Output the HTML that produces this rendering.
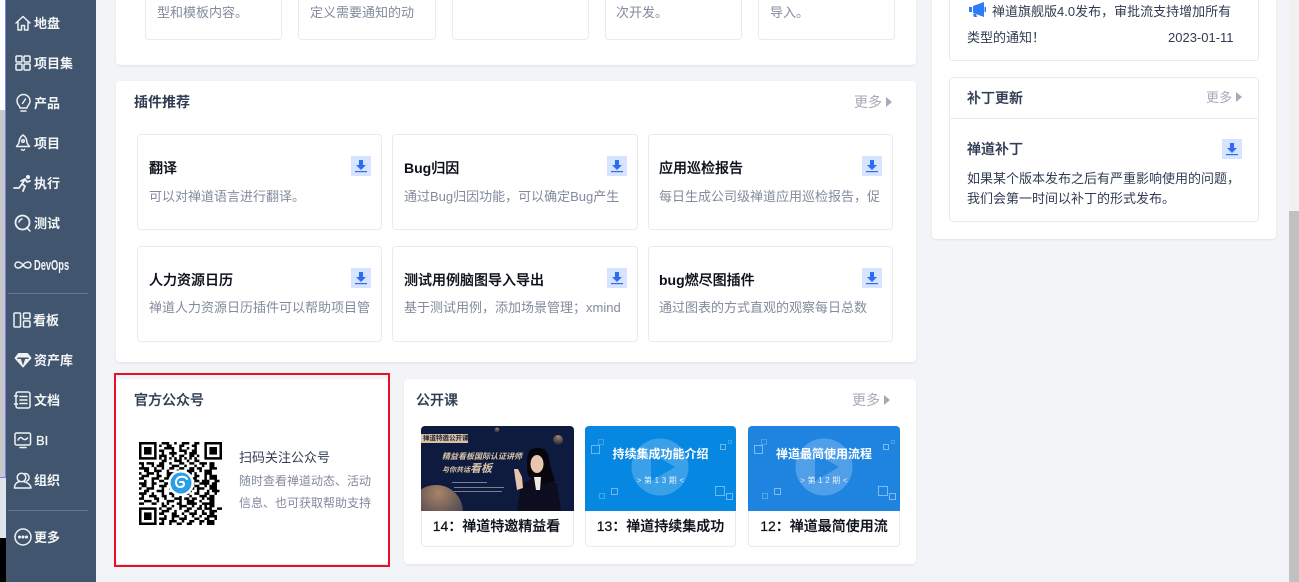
<!DOCTYPE html>
<html lang="zh-CN">
<head>
<meta charset="utf-8">
<title>禅道</title>
<style>
*{box-sizing:border-box;margin:0;padding:0}
html,body{width:1299px;height:582px;overflow:hidden;background:#f3f4f7}
body{position:relative;font-family:"Liberation Sans","Noto Sans CJK SC",sans-serif;font-size:13px;color:#313c52}
.a{position:absolute}
.t{position:absolute;white-space:nowrap;line-height:20px}
.card{position:absolute;background:#fff;border-radius:4px;box-shadow:0 1px 2px rgba(0,0,0,.08)}
.box{position:absolute;background:#fff;border:1px solid #e9ebef;border-radius:4px}
.nav{position:absolute;left:34px;color:#f2f4f6;font-weight:700;font-size:13px;line-height:20px;white-space:nowrap}
.ni{position:absolute;left:13px;width:20px;height:20px;fill:none;stroke:#eef1f4;stroke-width:1.5;stroke-linecap:round;stroke-linejoin:round}
.sep{position:absolute;left:8px;width:80px;height:1px;background:#65788e}
.title{font-size:14px;font-weight:700;color:#313c52}
.more{font-size:13px;color:#a6aab8}
.tri{position:absolute;width:0;height:0;border-left:6px solid #a6aab8;border-top:5px solid transparent;border-bottom:5px solid transparent}
.pt{font-size:14px;font-weight:500;color:#0b0f18;-webkit-text-stroke:.2px #0b0f18}
.pt b{font-weight:700;-webkit-text-stroke:0}
.gray{color:#838a9d}
.dl{position:absolute;width:20px;height:20px;background:#d6e4ff}
.dl svg{display:block;width:20px;height:20px}
.vid{position:absolute;top:426px;height:121px;background:#fff;box-shadow:inset 0 0 0 1px #e9ebef;border-radius:4px;overflow:hidden}
.vt{position:absolute;left:0;right:2px;top:85px;height:30px;text-align:center;line-height:30px;font-size:14px;font-weight:500;color:#0b0f18;white-space:nowrap;overflow:hidden;-webkit-text-stroke:.2px #0b0f18}
.thumb{position:absolute;left:0;top:0;right:0;height:85px;overflow:hidden}
</style>
</head>
<body>

<!-- left strip -->
<div class="a" style="left:0;top:0;width:6px;height:110px;background:#fff"></div>
<div class="a" style="left:0;top:110px;width:6px;height:367px;background:#c8c8c8"></div>
<div class="a" style="left:0;top:477px;width:6px;height:61px;background:#dde6ea"></div>
<div class="a" style="left:0;top:538px;width:6px;height:44px;background:#000"></div>
<div class="a" style="left:0;top:477px;width:6px;height:1px;background:#7b7ff0"></div>
<div class="a" style="left:5px;top:0;width:1px;height:477px;background:#7b7ff0"></div>

<!-- sidebar -->
<div class="a" style="left:6px;top:0;width:90px;height:582px;background:#41566e"></div>
<svg class="ni" style="top:13px" viewBox="0 0 20 20"><path d="M3 10 10 3.500 17 10M5 9v8h3.500v-4.500h3V17H15V9"/></svg>
<div class="nav" style="top:14px">地盘</div>
<svg class="ni" style="top:53px" viewBox="0 0 20 20"><rect x="3" y="3" width="6" height="6" rx="1"/><rect x="11" y="3" width="6" height="6" rx="1"/><rect x="3" y="11" width="6" height="6" rx="1"/><rect x="11" y="11" width="6" height="6" rx="1"/></svg>
<div class="nav" style="top:54px">项目集</div>
<svg class="ni" style="top:93px" viewBox="0 0 20 20"><path d="M7 15c0-2-3-3.500-3-7a6.500 6.500 0 0 1 13 0c0 3.500-3 5-3 7zM8 18h5M12.500 6 9.500 10.500"/></svg>
<div class="nav" style="top:94px">产品</div>
<svg class="ni" style="top:133px" viewBox="0 0 20 20"><path d="M10 2c3 2 4 5 4 8l2.500 3.500h-13L6 10c0-3 1-6 4-8zM8.500 16.500a1.800 1.800 0 0 0 3 0"/><circle cx="10" cy="8" r="1.300"/></svg>
<div class="nav" style="top:134px">项目</div>
<svg class="ni" style="top:173px" viewBox="0 0 20 20"><path d="M1 15h5l3-4 3 2-2 5M8 8l4-2 2 3 3-1M12 6l-3 5" stroke-width="1.800"/><circle cx="15" cy="4" r="1.300" fill="#eef1f4"/></svg>
<div class="nav" style="top:174px">执行</div>
<svg class="ni" style="top:213px" viewBox="0 0 20 20"><circle cx="9.500" cy="9.500" r="7" stroke-width="1.800"/><path d="M13.500 14.500 17 18M6 9a4 4 0 0 1 3-3"/></svg>
<div class="nav" style="top:214px">测试</div>
<svg class="ni" style="top:255px" viewBox="0 0 20 20"><path d="M10 10C8 7.500 6.500 7 5 7a3 3 0 0 0 0 6c1.500 0 3-.5 5-3s3.500-3 5-3a3 3 0 0 1 0 6c-1.500 0-3-.5-5-3z"/></svg>
<div class="nav" style="top:256px;transform:scaleX(.62);transform-origin:0 50%;font-size:15px">DevOps</div>
<div class="sep" style="top:293px"></div>
<svg class="ni" style="top:310px" viewBox="0 0 20 20"><rect x="1" y="3" width="6.500" height="14" rx="1"/><rect x="10.500" y="3" width="6.500" height="5.500" rx="1"/><rect x="10.500" y="11" width="6.500" height="6" rx="1"/></svg>
<div class="nav" style="top:311px;left:33px">看板</div>
<svg class="ni" style="top:350px" viewBox="0 0 20 20"><path d="M5.500 3.500h9L18 8l-8 9-8-9zM2 8h16M7 8l3 9 3-9M7 8l3-4 3 4" fill="#eef1f4" stroke-width="1"/><path d="M5 8.300h10" stroke="#41566e"/></svg>
<div class="nav" style="top:351px">资产库</div>
<svg class="ni" style="top:390px" viewBox="0 0 20 20"><rect x="3" y="2" width="14" height="16" rx="2"/><path d="M7 6.500h7M7 10h7M7 13.500h7M1.500 6h3M1.500 14h3"/></svg>
<div class="nav" style="top:391px">文档</div>
<svg class="ni" style="top:430px" viewBox="0 0 20 20"><rect x="2" y="3" width="15.500" height="12" rx="1.500"/><path d="M5 10c1.500-3 3-3 4.500-1.500S13 10 14.500 8M7 17.500h6"/></svg>
<div class="nav" style="top:431px;left:36px;font-weight:400;-webkit-text-stroke:.3px #f2f4f6">BI</div>
<svg class="ni" style="top:470px" viewBox="0 0 20 20"><circle cx="8.500" cy="7.500" r="4.300"/><path d="M1.500 18c0-4 2.500-6 5-6.500M12 3.500a4 4 0 0 1 2 7.500M11 11.800c3 .5 6.500 2.500 7 6.200M1.500 18h16.500"/></svg>
<div class="nav" style="top:471px">组织</div>
<div class="sep" style="top:510px"></div>
<svg class="ni" style="top:527px" viewBox="0 0 20 20"><circle cx="10" cy="10" r="8"/><circle cx="6.500" cy="10" r=".8" fill="#eef1f4"/><circle cx="10" cy="10" r=".8" fill="#eef1f4"/><circle cx="13.500" cy="10" r=".8" fill="#eef1f4"/></svg>
<div class="nav" style="top:528px">更多</div>

<!-- card 1 -->
<div class="card" style="left:116px;top:-40px;width:800px;height:105px"></div>
<div class="box" style="left:145px;top:-40px;width:137px;height:80px"></div>
<div class="box" style="left:298px;top:-40px;width:138px;height:80px"></div>
<div class="box" style="left:452px;top:-40px;width:137px;height:80px"></div>
<div class="box" style="left:605px;top:-40px;width:137px;height:80px"></div>
<div class="box" style="left:758px;top:-40px;width:137px;height:80px"></div>
<div class="t gray" style="left:157px;top:3px">型和模板内容。</div>
<div class="t gray" style="left:310px;top:3px">定义需要通知的动</div>
<div class="t gray" style="left:616px;top:3px">次开发。</div>
<div class="t gray" style="left:770px;top:3px">导入。</div>

<!-- plugin card -->
<div class="card" style="left:116px;top:81px;width:800px;height:281px"></div>
<div class="t title" style="left:134px;top:92px">插件推荐</div>
<div class="t more" style="left:854px;top:92px;font-size:14px">更多</div>
<div class="tri" style="left:886px;top:97px"></div>

<div class="box" style="left:137px;top:134px;width:245px;height:96px"></div>
<div class="box" style="left:392px;top:134px;width:246px;height:96px"></div>
<div class="box" style="left:648px;top:134px;width:245px;height:96px"></div>
<div class="box" style="left:137px;top:246px;width:245px;height:96px"></div>
<div class="box" style="left:392px;top:246px;width:246px;height:96px"></div>
<div class="box" style="left:648px;top:246px;width:245px;height:96px"></div>

<div class="t pt" style="left:149px;top:158px">翻译</div>
<div class="t gray" style="left:149px;top:187px">可以对禅道语言进行翻译。</div>
<div class="t pt" style="left:404px;top:158px"><b>Bug</b>归因</div>
<div class="t gray" style="left:404px;top:187px;width:216px;overflow:hidden">通过Bug归因功能，可以确定Bug产生</div>
<div class="t pt" style="left:659px;top:158px">应用巡检报告</div>
<div class="t gray" style="left:659px;top:187px;width:222px;overflow:hidden">每日生成公司级禅道应用巡检报告，促</div>
<div class="t pt" style="left:149px;top:270px">人力资源日历</div>
<div class="t gray" style="left:149px;top:298px;width:221px;overflow:hidden">禅道人力资源日历插件可以帮助项目管</div>
<div class="t pt" style="left:404px;top:270px">测试用例脑图导入导出</div>
<div class="t gray" style="left:404px;top:298px;width:222px;overflow:hidden">基于测试用例，添加场景管理；xmind</div>
<div class="t pt" style="left:659px;top:270px"><b>bug</b>燃尽图插件</div>
<div class="t gray" style="left:659px;top:298px;width:222px;overflow:hidden">通过图表的方式直观的观察每日总数</div>

<div class="dl" style="left:351px;top:156px"><svg viewBox="0 0 20 20"><path fill="#2e6cf6" d="M8 4h4v5h3l-5 5-5-5h3z"/><rect x="4" y="15" width="12" height="1.200" fill="#2e6cf6"/></svg></div>
<div class="dl" style="left:607px;top:156px"><svg viewBox="0 0 20 20"><path fill="#2e6cf6" d="M8 4h4v5h3l-5 5-5-5h3z"/><rect x="4" y="15" width="12" height="1.200" fill="#2e6cf6"/></svg></div>
<div class="dl" style="left:862px;top:156px"><svg viewBox="0 0 20 20"><path fill="#2e6cf6" d="M8 4h4v5h3l-5 5-5-5h3z"/><rect x="4" y="15" width="12" height="1.200" fill="#2e6cf6"/></svg></div>
<div class="dl" style="left:351px;top:268px"><svg viewBox="0 0 20 20"><path fill="#2e6cf6" d="M8 4h4v5h3l-5 5-5-5h3z"/><rect x="4" y="15" width="12" height="1.200" fill="#2e6cf6"/></svg></div>
<div class="dl" style="left:607px;top:268px"><svg viewBox="0 0 20 20"><path fill="#2e6cf6" d="M8 4h4v5h3l-5 5-5-5h3z"/><rect x="4" y="15" width="12" height="1.200" fill="#2e6cf6"/></svg></div>
<div class="dl" style="left:862px;top:268px"><svg viewBox="0 0 20 20"><path fill="#2e6cf6" d="M8 4h4v5h3l-5 5-5-5h3z"/><rect x="4" y="15" width="12" height="1.200" fill="#2e6cf6"/></svg></div>

<!-- official account -->
<div class="card" style="left:116px;top:379px;width:272px;height:185px"></div>
<div class="a" style="left:114px;top:373px;width:276px;height:194px;border:2px solid #e81123"></div>
<div class="t title" style="left:134px;top:390px;font-weight:500;-webkit-text-stroke:.2px #313c52">官方公众号</div>
<svg class="a" style="left:139px;top:442px;width:83px;height:83px" viewBox="0 0 33 33">
<path fill="#000" fill-rule="evenodd" d="M0 0h7v7H0zM1 1v5h5V1zM2 2h3v3H2zM26 0h7v7h-7zM27 1v5h5V1zM28 2h3v3h-3zM0 26h7v7H0zM1 27v5h5v-5zM2 28h3v3H2z"/>
<path stroke="#000" stroke-width="1" fill="none" d="M9 .5h3m2 0h1m2 0h3m2 0h2M8 1.500h1m2 0h2m3 0h2m3 0h2M10 2.500h4m2 0h1m2 0h1m2 0h1M8 3.500h2m3 0h1m2 0h3m2 0h2M9 4.500h1m2 0h3m3 0h1m1 0h3M8 5.500h3m2 0h1m2 0h2m2 0h2m1 0h1M8 6.500h1m1 0h1m1 0h1m1 0h1m1 0h1m1 0h1m1 0h1m1 0h1M9 7.500h2m3 0h3m2 0h1m2 0h2M0 8.500h2m1 0h3m2 0h2m2 0h1m3 0h2m2 0h2m2 0h3m1 0h2M1 9.500h1m3 0h1m1 0h3m3 0h3m2 0h1m3 0h1m2 0h1m2 0h2M0 10.500h4m2 0h1m2 0h1m2 0h2m2 0h2m2 0h2m1 0h2m3 0h3M2 11.500h2m2 0h3m2 0h1m3 0h1m3 0h3m2 0h1m1 0h3M0 12.500h1m2 0h3m1 0h1m3 0h3m2 0h1m2 0h2m1 0h1m3 0h3M1 13.500h3m3 0h2m2 0h2m2 0h1m6 0h2m2 0h1m1 0h3M0 14.500h2m3 0h3m2 0h3m7 0h3m3 0h1m1 0h3M2 15.500h1m2 0h1m2 0h2m2 0h1m9 0h2m1 0h3m2 0h2M0 16.500h3m2 0h2m3 0h2m9 0h1m2 0h4m1 0h2M1 17.500h2m2 0h1m2 0h3m2 0h1m8 0h2m2 0h1m1 0h3M0 18.500h1m2 0h3m3 0h1m2 0h1m7 0h2m1 0h3m2 0h3M2 19.500h2m3 0h3m3 0h3m3 0h2m2 0h1m3 0h1m1 0h3M0 20.500h3m2 0h1m3 0h1m2 0h2m2 0h4m2 0h2m2 0h2m2 0h1M1 21.500h1m2 0h3m2 0h2m2 0h1m2 0h1m3 0h1m3 0h3m1 0h2M0 22.500h2m4 0h2m2 0h1m3 0h3m1 0h2m1 0h2m2 0h1m1 0h3M2 23.500h3m2 0h1m3 0h3m2 0h1m2 0h3m2 0h1m3 0h2M0 24.500h2m3 0h2m2 0h1m1 0h1m3 0h2m2 0h4m2 0h5M9 25.500h2m2 0h1m2 0h3m2 0h1m2 0h1m1 0h1m1 0h2M8 26.500h1m2 0h2m3 0h1m2 0h2m2 0h2m1 0h3m2 0h2M9 27.500h3m2 0h1m3 0h2m2 0h1m2 0h1m2 0h3M8 28.500h2m3 0h2m2 0h1m2 0h3m2 0h2m1 0h2M10 29.500h1m2 0h3m2 0h1m2 0h1m2 0h1m2 0h4M8 30.500h3m2 0h1m2 0h3m3 0h2m2 0h2m2 0h1M9 31.500h1m2 0h3m2 0h1m2 0h2m2 0h2m1 0h3M8 32.500h2m2 0h1m2 0h2m2 0h2m3 0h1m2 0h3"/>
</svg>
<svg class="a" style="left:168px;top:470px;width:26px;height:26px" viewBox="0 0 26 26"><circle cx="13" cy="13" r="13" fill="#fff"/><circle cx="13" cy="13" r="10.500" fill="#2b9ee8"/><path d="M19 9c-2-3-8-3-10 0s-1 8 3 8 5-3 3-5h-3" fill="none" stroke="#fff" stroke-width="2" stroke-linecap="round"/></svg>
<div class="t" style="left:239px;top:448px;font-size:13px">扫码关注公众号</div>
<div class="t gray" style="left:239px;top:471px;font-size:12px">随时查看禅道动态、活动</div>
<div class="t gray" style="left:239px;top:493px;font-size:12px">信息、也可获取帮助支持</div>

<!-- public course -->
<div class="card" style="left:404px;top:379px;width:512px;height:185px"></div>
<div class="t title" style="left:416px;top:390px;font-weight:500;-webkit-text-stroke:.2px #313c52">公开课</div>
<div class="t more" style="left:852px;top:390px;font-size:14px">更多</div>
<div class="tri" style="left:884px;top:395px"></div>

<div class="vid" style="left:421px;width:153px"><div class="thumb" style="background:#0e1b3e">
<svg class="a" style="left:0;top:0" width="153" height="85" viewBox="0 0 153 85">
<defs><radialGradient id="g1" cx=".55" cy=".15" r=".9"><stop offset="0" stop-color="#a98468"/><stop offset="1" stop-color="#13203f"/></radialGradient></defs>
<circle cx="15" cy="86" r="27" fill="url(#g1)"/><circle cx="137" cy="14" r="5" fill="url(#g1)"/><circle cx="76" cy="4" r="2.500" fill="url(#g1)"/>
<rect x="0" y="8" width="47" height="9" fill="#d8c0a5"/>
<path d="M96 85l4-27 13-6h11l12 6 4 27z" fill="#0c0d1e"/>
<path d="M107 50c-2-14-1-25 4-27 8-3 16 0 17 9 1 9 4 16 6 23l-14 4z" fill="#06060c"/>
<ellipse cx="116" cy="38" rx="6.500" ry="9" fill="#e8c5ae"/>
<path d="M113 51h7l-1 13h-4z" fill="#f0e9e4"/>
<path d="M97 43l4 8 1 11-6 2-2-13-1-8z" fill="#e8c5ae"/>
</svg>
<div class="t" style="left:2px;top:8px;line-height:9px;font-size:6.500px;color:#1f2436;font-weight:700">禅道特邀公开课</div>
<div class="t" style="left:21px;top:25px;line-height:11px;font-size:8px;color:#d9c5ab;font-weight:700;font-style:italic">精益看板国际认证讲师</div>
<div class="t" style="left:21px;top:36px;line-height:14px;font-size:7px;color:#d9c5ab;font-weight:700;font-style:italic">与你共话<span style="font-size:11px">看板</span></div>
<div class="a" style="left:31px;top:56px;width:35px;height:1px;background:#79808f"></div>
<div class="a" style="left:33px;top:61px;width:50px;height:1px;background:#79808f"></div>
<div class="a" style="left:33px;top:65px;width:48px;height:1px;background:#79808f"></div>
</div><div class="vt">14：禅道特邀精益看</div></div>

<div class="vid" style="left:585px;width:151px"><div class="thumb" style="background:#0688e2">
<svg class="a" style="left:0;top:0" width="151" height="85" viewBox="0 0 151 85" fill="none" stroke="#6cb9f0">
<circle cx="75" cy="41" r="28.500" fill="#3aa0e8" stroke="none"/><path d="M66 27l24 14-24 14z" fill="#0688e2" stroke="none" opacity=".9"/>
<rect x="6.500" y="19.500" width="8" height="8"/><rect x="13.500" y="13.500" width="5" height="5" opacity=".5"/><rect x="135.500" y="18.500" width="5" height="5"/><rect x="143.500" y="14.500" width="3" height="3" opacity=".5"/>
<rect x="130.500" y="60.500" width="9" height="9"/><rect x="141.500" y="67.500" width="6" height="6"/><rect x="14.500" y="67.500" width="5" height="5" opacity=".6"/><rect x="26.500" y="62.500" width="6" height="6"/>
</svg>
<div class="t" style="left:0;right:0;top:18px;text-align:center;font-size:12px;font-weight:700;color:#fff">持续集成功能介绍</div>
<div class="t" style="left:0;right:0;top:45px;text-align:center;font-size:8px;letter-spacing:.2px;color:#e4f2fc">&gt; 第 1 3 期 &lt;</div>
</div><div class="vt" style="right:0">13：禅道持续集成功</div></div>

<div class="vid" style="left:748px;width:152px"><div class="thumb" style="background:#1e84e0">
<svg class="a" style="left:0;top:0" width="152" height="85" viewBox="0 0 152 85" fill="none" stroke="#7cbcf0">
<circle cx="76" cy="41" r="28.500" fill="#509fe8" stroke="none"/><path d="M67 27l24 14-24 14z" fill="#1e84e0" stroke="none" opacity=".9"/>
<rect x="6.500" y="19.500" width="8" height="8"/><rect x="13.500" y="13.500" width="5" height="5" opacity=".5"/><rect x="135.500" y="18.500" width="5" height="5"/><rect x="143.500" y="14.500" width="3" height="3" opacity=".5"/>
<rect x="130.500" y="60.500" width="9" height="9"/><rect x="141.500" y="67.500" width="6" height="6"/><rect x="14.500" y="67.500" width="5" height="5" opacity=".6"/><rect x="26.500" y="62.500" width="6" height="6"/>
</svg>
<div class="t" style="left:0;right:0;top:18px;text-align:center;font-size:12px;font-weight:700;color:#fff">禅道最简使用流程</div>
<div class="t" style="left:0;right:0;top:45px;text-align:center;font-size:8px;letter-spacing:.2px;color:#e4f2fc">&gt; 第 1 2 期 &lt;</div>
</div><div class="vt" style="right:0">12：禅道最简使用流</div></div>

<!-- right column -->
<div class="card" style="left:932px;top:-40px;width:344px;height:279px"></div>
<div class="box" style="left:949px;top:-40px;width:310px;height:101px"></div>
<svg class="a" style="left:968px;top:2px;width:18px;height:16px" viewBox="0 0 18 16"><path fill="#2e7cf6" d="M5 4 16 0v15L5 11zM1 5h3v5H1z"/><path fill="#2e7cf6" d="M5 12h3l1 3H6z"/><rect x="16.500" y="5" width="1.500" height="5" fill="#2e7cf6"/></svg>
<div class="t" style="left:992px;top:2px">禅道旗舰版4.0发布，审批流支持增加所有</div>
<div class="t" style="left:967px;top:28px">类型的通知！</div>
<div class="t" style="left:1168px;top:28px;font-size:13px">2023-01-11</div>

<div class="box" style="left:949px;top:77px;width:310px;height:145px"></div>
<div class="a" style="left:950px;top:118px;width:308px;height:1px;background:#e9ebef"></div>
<div class="t title" style="left:967px;top:88px;font-weight:500;-webkit-text-stroke:.2px #313c52">补丁更新</div>
<div class="t more" style="left:1206px;top:88px">更多</div>
<div class="tri" style="left:1236px;top:92px"></div>
<div class="t title" style="left:967px;top:139px;font-weight:500;-webkit-text-stroke:.2px #313c52">禅道补丁</div>
<div class="dl" style="left:1222px;top:139px"><svg viewBox="0 0 20 20"><path fill="#2e6cf6" d="M8 4h4v5h3l-5 5-5-5h3z"/><rect x="4" y="15" width="12" height="1.200" fill="#2e6cf6"/></svg></div>
<div class="t" style="left:967px;top:169px">如果某个版本发布之后有严重影响使用的问题，</div>
<div class="t" style="left:967px;top:189px">我们会第一时间以补丁的形式发布。</div>

<!-- scrollbar -->
<div class="a" style="left:1289px;top:0;width:10px;height:582px;background:#f1f1f1"></div>
<div class="a" style="left:1289px;top:211px;width:10px;height:371px;background:#c1c1c1"></div>

</body>
</html>
